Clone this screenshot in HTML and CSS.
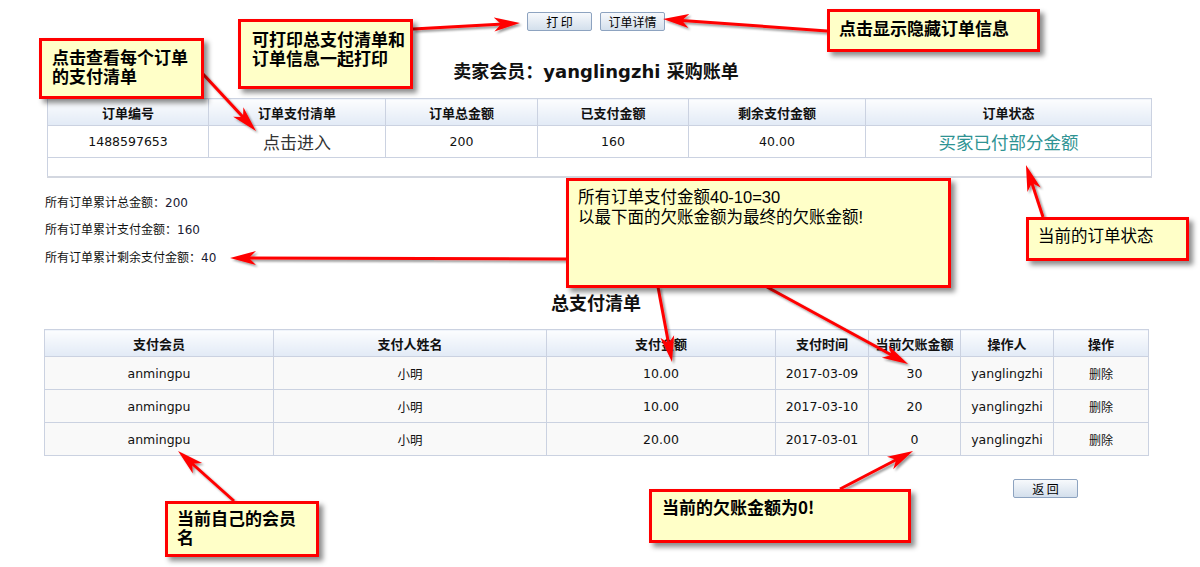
FILE: index.html
```html
<!DOCTYPE html>
<html>
<head>
<meta charset="utf-8">
<title>采购账单</title>
<link rel="stylesheet" href="styles.css">
</head>
<body>

<div class="toolbar">
	<button type="button" class="btn">打 印</button>
	<button type="button" class="btn">订单详情</button>
</div>

<div class="title">卖家会员：<span class="latin">yanglingzhi</span> 采购账单</div>

<table class="grid orders">
<colgroup>
	<col class="o1"><col class="o2"><col class="o3"><col class="o4"><col class="o5"><col class="o6">
</colgroup>
<tr class="head">
	<th>订单编号</th>
	<th>订单支付清单</th>
	<th>订单总金额</th>
	<th>已支付金额</th>
	<th>剩余支付金额</th>
	<th>订单状态</th>
</tr>
<tr class="row">
	<td>1488597653</td>
	<td><a class="enter" href="#">点击进入</a></td>
	<td>200</td>
	<td>160</td>
	<td>40.00</td>
	<td class="state">买家已付部分金额</td>
</tr>
<tr class="blank"><td colspan="6"></td></tr>
</table>

<div class="summary">
	<p>所有订单累计总金额：<span class="num">200</span></p>
	<p>所有订单累计支付金额：<span class="num">160</span></p>
	<p>所有订单累计剩余支付金额：<span class="num">40</span></p>
</div>

<div class="subtitle">总支付清单</div>

<table class="grid pays">
<colgroup>
	<col class="p1"><col class="p2"><col class="p3"><col class="p4"><col class="p5"><col class="p6"><col class="p7">
</colgroup>
<tr class="head">
	<th>支付会员</th>
	<th>支付人姓名</th>
	<th>支付金额</th>
	<th>支付时间</th>
	<th>当前欠账金额</th>
	<th>操作人</th>
	<th>操作</th>
</tr>
<tr class="row">
	<td>anmingpu</td><td>小明</td><td>10.00</td><td>2017-03-09</td><td>30</td><td>yanglingzhi</td><td class="del">删除</td>
</tr>
<tr class="row">
	<td>anmingpu</td><td>小明</td><td>10.00</td><td>2017-03-10</td><td>20</td><td>yanglingzhi</td><td class="del">删除</td>
</tr>
<tr class="row">
	<td>anmingpu</td><td>小明</td><td>20.00</td><td>2017-03-01</td><td>0</td><td>yanglingzhi</td><td class="del">删除</td>
</tr>
</table>

<div class="footer">
	<button type="button" class="btn">返 回</button>
</div>

<!-- annotation layer -->
<svg class="arrows" width="1200" height="567">
<defs>
	<marker id="head" markerUnits="userSpaceOnUse" markerWidth="28" markerHeight="16" refX="14" refY="8" orient="auto">
		<path d="M0,1 L26,8 L0,15 L7,8 Z" fill="#f00"/>
	</marker>
	<filter id="sh" x="-30%" y="-30%" width="160%" height="160%">
		<feDropShadow dx="2" dy="2" stdDeviation="1.2" flood-color="#000" flood-opacity="0.4"/>
	</filter>
</defs>
<g stroke="#f00" stroke-width="3" fill="none" filter="url(#sh)">
	<line x1="203" y1="74" x2="247.8" y2="122.2" marker-end="url(#head)"/>
	<line x1="413" y1="29" x2="508" y2="23.7" marker-end="url(#head)"/>
	<line x1="827" y1="31" x2="675" y2="19.9" marker-end="url(#head)"/>
	<line x1="1043" y1="217" x2="1029.7" y2="176.4" marker-end="url(#head)"/>
	<line x1="566" y1="259" x2="242" y2="258" marker-end="url(#head)"/>
	<line x1="658" y1="287" x2="669.8" y2="350.2" marker-end="url(#head)"/>
	<line x1="767" y1="287" x2="897.5" y2="358.3" marker-end="url(#head)"/>
	<line x1="234" y1="501" x2="187" y2="459" marker-end="url(#head)"/>
	<line x1="840" y1="489" x2="902.4" y2="456.5" marker-end="url(#head)"/>
</g>
</svg>

<div class="note n1">点击查看每个订单<br>的支付清单</div>
<div class="note n2">可打印总支付清单和<br>订单信息一起打印</div>
<div class="note n3">点击显示隐藏订单信息</div>
<div class="note plain n4">所有订单支付金额40-10=30<br>以最下面的欠账金额为最终的欠账金额!</div>
<div class="note plain n5">当前的订单状态</div>
<div class="note n6">当前自己的会员<br>名</div>
<div class="note n7">当前的欠账金额为0!</div>

</body>
</html>
```

FILE: styles.css
```css
body {
	margin: 0;
	background: #fff;
	color: #111;
	font-family: "DejaVu Sans", "Noto Sans CJK SC", sans-serif;
	font-size: 12.5px;
}

.btn {
	width: 65px;
	height: 19px;
	padding: 0;
	border: 1px solid #8da3c0;
	border-radius: 2px;
	background: linear-gradient(#f7f9fc, #d3dfec);
	color: #000;
	font-family: "Noto Sans CJK SC", sans-serif;
	font-size: 12px;
	line-height: 17px;
}

.toolbar {
	padding: 12px 8px 0 0;
	height: 19px;
	text-align: center;
	font-size: 0;
}
.toolbar .btn {
	margin: 0 4px;
}

.title {
	margin: 29px 8px 14px 0;
	height: 24px;
	line-height: 24px;
	text-align: center;
	font-family: "DejaVu Sans", "Noto Sans CJK SC", sans-serif;
	font-size: 18px;
	font-weight: bold;
	color: #111;
}

/* tables */
.grid {
	border-collapse: collapse;
	table-layout: fixed;
	width: 1104px;
}
.grid th, .grid td {
	border: 1px solid #cbd2e1;
	padding: 0;
	text-align: center;
	white-space: nowrap;
}
.grid th {
	background: linear-gradient(#fcfdfe, #e2eaf6);
	font-family: "Noto Sans CJK SC", sans-serif;
	font-size: 13px;
	font-weight: bold;
	color: #111;
}
.grid .head { height: 27px; }

.orders { margin-left: 47px; }
.orders .row { height: 32px; }
.orders .blank { height: 19px; }
.orders .blank td { border-bottom: 2px solid #d3d7e0; }
.o1 { width: 161px; }
.o2 { width: 177px; }
.o3 { width: 152px; }
.o4 { width: 151px; }
.o5 { width: 177px; }
.o6 { width: 286px; }

.enter {
	color: #333;
	text-decoration: none;
	font-family: "Noto Sans CJK SC", sans-serif;
	font-size: 17px;
}
.orders .state {
	color: #2f9393;
	font-family: "Noto Sans CJK SC", sans-serif;
	font-size: 17.5px;
}

.summary {
	margin: 12px 0 0 45px;
	font-size: 12px;
}
.summary p {
	margin: 0;
	line-height: 27.5px;
}
.summary .num { color: #1a1a33; }

.subtitle {
	margin: 18px 8px 15px 0;
	height: 24px;
	line-height: 24px;
	text-align: center;
	font-family: "Noto Sans CJK SC", sans-serif;
	font-size: 18px;
	font-weight: bold;
}

.pays { margin-left: 44px; }
.pays .row { height: 33px; }
.pays td { background: #f9f9f9; }
.pays .del { font-family: "Noto Sans CJK SC", sans-serif; font-size: 12px; }
.p1 { width: 229px; }
.p2 { width: 273px; }
.p3 { width: 229px; }
.p4 { width: 93px; }
.p5 { width: 92px; }
.p6 { width: 93px; }
.p7 { width: 95px; }

.footer {
	margin: 23px 0 0 1013px;
}

/* annotations */
.arrows {
	position: absolute;
	left: 0;
	top: 0;
	pointer-events: none;
}
.note {
	position: absolute;
	box-sizing: border-box;
	border: 3px solid #f00;
	background: #ffffc8;
	box-shadow: 4px 4px 5px rgba(0, 0, 0, 0.45);
	color: #000;
	font-family: "Noto Sans CJK SC", sans-serif;
	font-size: 17px;
	font-weight: bold;
	line-height: 19px;
	padding: 6px 10px;
	white-space: nowrap;
}
.note.plain {
	font-family: "Liberation Sans", "Noto Sans CJK SC", sans-serif;
	font-weight: normal;
	font-size: 16.5px;
	line-height: 20px;
	padding: 6px 9px;
}
.n1 { left: 39px;   top: 38px;  width: 165px; height: 61px; }
.n2 { left: 238px;  top: 19px;  width: 175px; height: 70px; padding: 7px 0 0 11px; }
.n3 { left: 827px;  top: 9px;   width: 213px; height: 43px; padding: 6px 9px; }
.n4 { left: 566px;  top: 178px; width: 385px; height: 110px; }
.n5 { left: 1026px; top: 217px; width: 163px; height: 44px; }
.n6 { left: 165px;  top: 501px; width: 154px; height: 56px; padding: 4px 9px; }
.n7 { left: 649px;  top: 489px; width: 262px; height: 54px; padding: 5px 10px; }
```
